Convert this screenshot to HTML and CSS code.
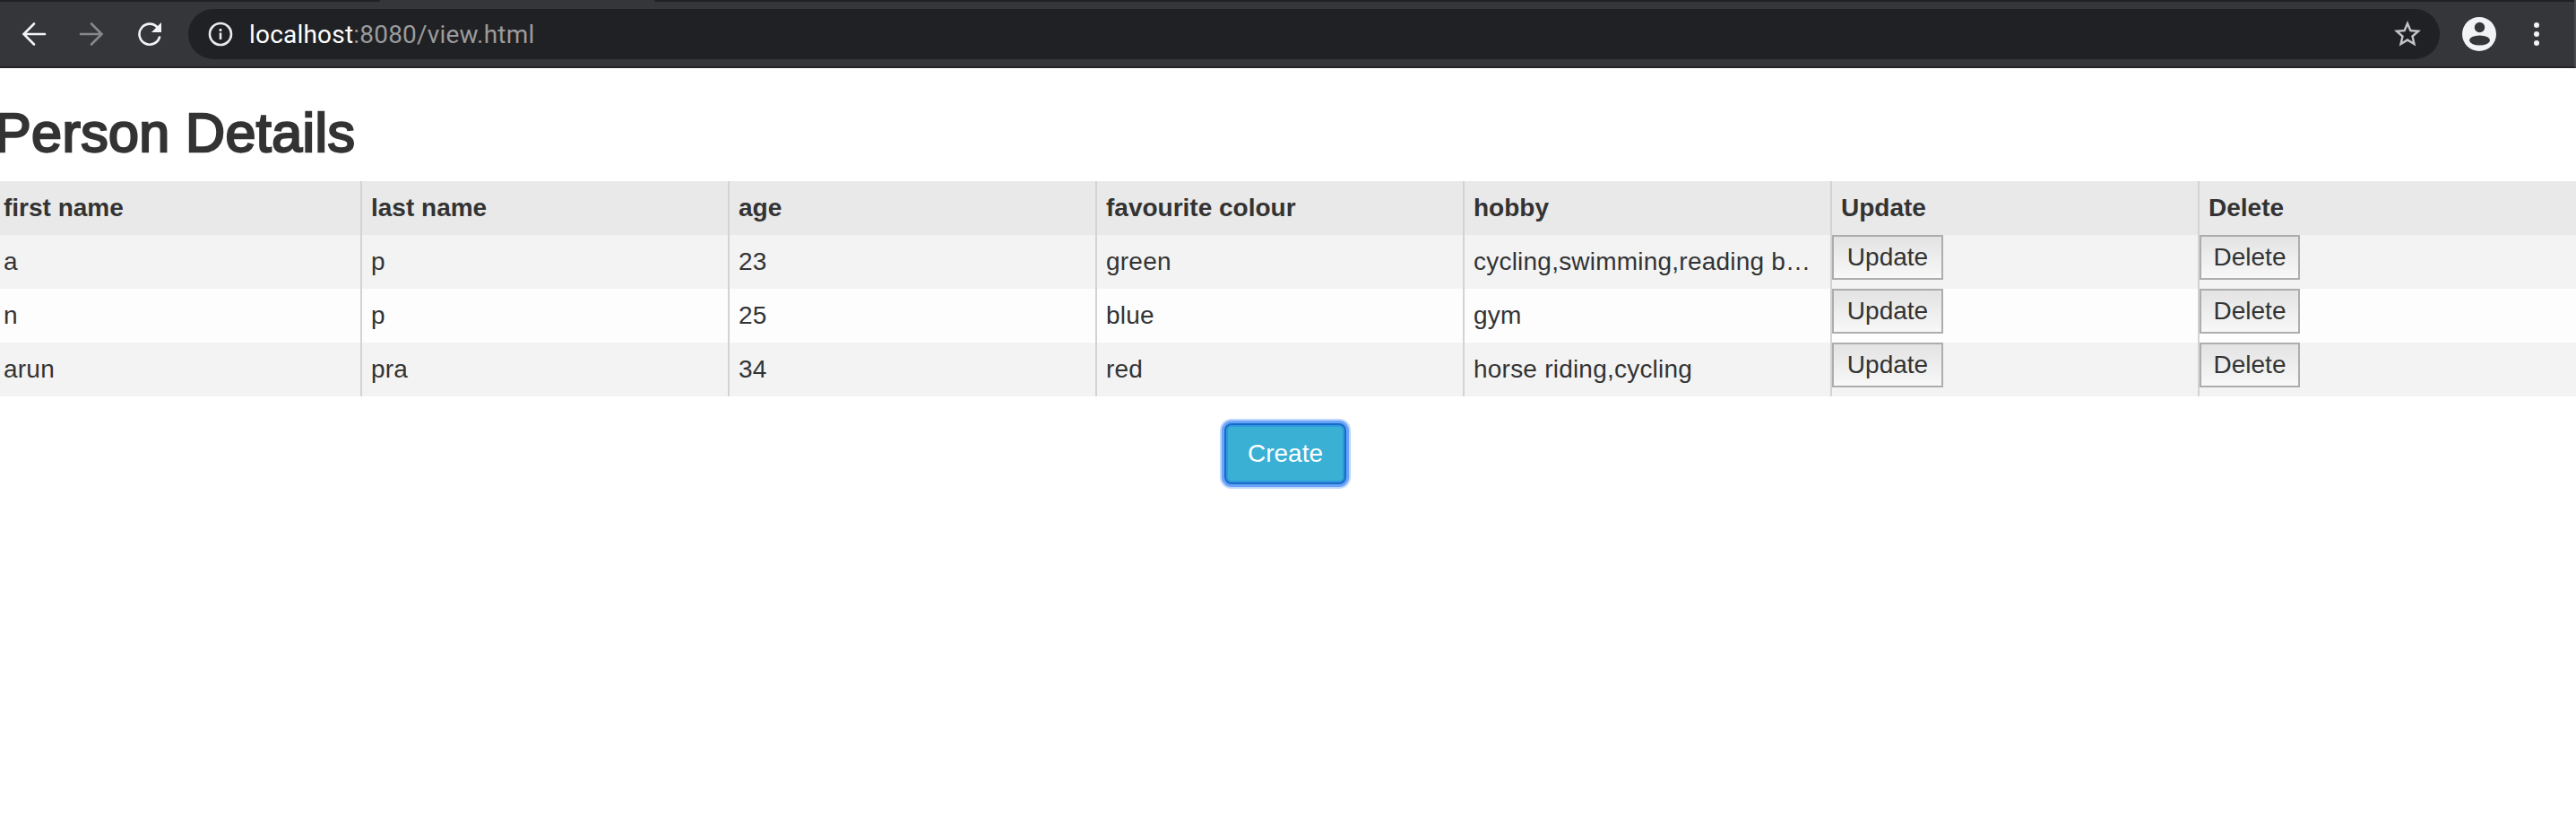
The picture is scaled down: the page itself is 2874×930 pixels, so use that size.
FILE: index.html
```
<!DOCTYPE html>
<html lang="en">
<head>
<meta charset="utf-8">
<title>Person Details</title>
<link rel="stylesheet" href="styles.css">
</head>
<body>
<header class="browser">
  <div class="tab-edge"><span class="strip-left"></span><span class="strip-right"></span></div>
  <nav class="toolbar">
    <svg class="icon back" viewBox="0 0 28 28"><path d="M26 14H3M14 2.500 2.500 14 14 25.500"/></svg>
    <svg class="icon forward" viewBox="0 0 28 28"><path d="M2 14h23M14 2.500 25.500 14 14 25.500"/></svg>
    <svg class="icon reload" viewBox="0 0 28 28"><path d="M23 7A11.500 11.500 0 1 0 25 17.500"/><path class="fill" d="M27 1v11H16z"/></svg>
    <div class="address">
      <svg class="icon info" viewBox="0 0 28 28"><circle cx="14" cy="14" r="12"/><path d="M14 12.500V20M14 8v3"/></svg>
      <span class="url"><b class="host">localhost</b>:8080/view.html</span>
      <svg class="star" viewBox="0 0 24 24"><path d="M22 9.240l-7.190-.620L12 2 9.190 8.630 2 9.240l5.460 4.730L5.820 21 12 17.270 18.180 21l-1.630-7.030L22 9.240zM12 15.400l-3.760 2.270 1-4.280-3.320-2.880 4.380-.380L12 6.100l1.710 4.040 4.380.380-3.320 2.880 1 4.280L12 15.400z"/></svg>
    </div>
    <svg class="avatar" viewBox="0 0 38 38"><circle class="disc" cx="19" cy="19" r="19"/><circle cx="19.500" cy="11.500" r="5.700"/><ellipse cx="19.500" cy="26" rx="11.500" ry="5.600"/></svg>
    <svg class="more" viewBox="0 0 6 28"><circle cx="3" cy="4" r="3"/><circle cx="3" cy="14" r="3"/><circle cx="3" cy="24" r="3"/></svg>
  </nav>
</header>
<main>
  <h1 class="title">Person Details</h1>
  <table class="people">
    <colgroup><col class="first"><col class="mid"><col class="mid"><col class="mid"><col class="mid"><col class="mid"><col></colgroup>
    <thead>
      <tr><th>first name</th><th>last name</th><th>age</th><th>favourite colour</th><th>hobby</th><th>Update</th><th>Delete</th></tr>
    </thead>
    <tbody>
      <tr><td>a</td><td>p</td><td>23</td><td>green</td><td>cycling,swimming,reading b…</td><td class="action"><button class="btn">Update</button></td><td class="action"><button class="btn del">Delete</button></td></tr>
      <tr><td>n</td><td>p</td><td>25</td><td>blue</td><td>gym</td><td class="action"><button class="btn">Update</button></td><td class="action"><button class="btn del">Delete</button></td></tr>
      <tr><td>arun</td><td>pra</td><td>34</td><td>red</td><td>horse riding,cycling</td><td class="action"><button class="btn">Update</button></td><td class="action"><button class="btn del">Delete</button></td></tr>
    </tbody>
  </table>
  <div class="footer"><button class="create">Create</button></div>
</main>
</body>
</html>
```
FILE: styles.css
```
* { box-sizing: border-box; }
body { margin: 0; height: 930px; overflow: hidden; background: #fff; color: #333; font: 28px/40px "Liberation Sans", Arial, sans-serif; }
.browser { height: 76px; background: #35363a; border-bottom: 2px solid #242328; border-right: 2px solid #4a4b4f; }
.tab-edge { height: 2px; display: flex; justify-content: space-between; }
.strip-left { width: 424px; background: #202124; border-bottom-right-radius: 4px; }
.strip-right { width: 2142px; background: #202124; border-bottom-left-radius: 4px; }
.toolbar { height: 72px; padding: 0 39px 0 24px; display: flex; align-items: center; }
.icon { width: 28px; height: 28px; fill: none; stroke: #f1f3f4; stroke-width: 2.6; flex: none; }
.icon .fill { fill: #f1f3f4; stroke: none; }
.back, .forward, .reload { stroke-linecap: round; }
.back { margin-right: 36px; }
.forward { margin-right: 37px; stroke: #87888a; }
.reload { margin-right: 29px; }
.address { width: 2512px; height: 56px; border-radius: 28px; background: #202124; display: flex; align-items: center; padding: 0 18px 0 22px; }
.info { stroke: #e8eaed; }
.url { margin-left: 18px; padding-top: 1px; flex: 1; color: #9a9b9d; font-family: Roboto, "Liberation Sans", sans-serif; letter-spacing: .2px; }
.host { color: #fff; font-weight: 400; }
.star { width: 36px; height: 36px; fill: #c3c4c6; }
.avatar { width: 38px; height: 38px; margin-left: 25px; fill: #35363a; }
.avatar .disc { fill: #f1f3f4; }
.more { width: 6px; height: 28px; margin-left: auto; fill: #f1f3f4; }
.title { margin: 0 0 0 -6px; padding-top: 32px; height: 126px; font-size: 61px; line-height: 80px; font-weight: 400; letter-spacing: .4px; -webkit-text-stroke: 2.4px #333; white-space: nowrap; }
.people { width: 100%; table-layout: fixed; border-collapse: separate; border-spacing: 0; }
.first { width: 402px; }
.mid { width: 410px; }
tr { height: 60px; background: #fdfdfd; }
tbody tr:nth-child(odd) { background: #f3f3f3; }
thead tr { background: #e9e9e9; }
th, td { padding: 0 10px; text-align: left; vertical-align: middle; white-space: nowrap; overflow: hidden; border-left: 2px solid #d3d3d3; }
td { letter-spacing: .22px; }
th:first-child, td:first-child { border-left: 0; padding-left: 4px; }
td.action { padding: 0; vertical-align: top; }
.btn { display: block; width: 124px; height: 50px; padding: 0 0 1px; border: 2px solid #adadad; background: linear-gradient(#e3e3e3, #f8f8f8); color: #333; font: inherit; line-height: 44px; }
.del { width: 112px; }
.footer { display: flex; justify-content: center; padding: 30px 6px 0 0; }
.create { width: 136px; height: 68px; padding: 0 0 1px; border: 2px solid #186bc9; border-radius: 8px; background: #3ab0d5; color: #fff; font: inherit; box-shadow: inset 0 0 0 2px #2e98df, 0 0 0 3px #69a3f8, 0 0 0 5px #bfd7fc; }
```
